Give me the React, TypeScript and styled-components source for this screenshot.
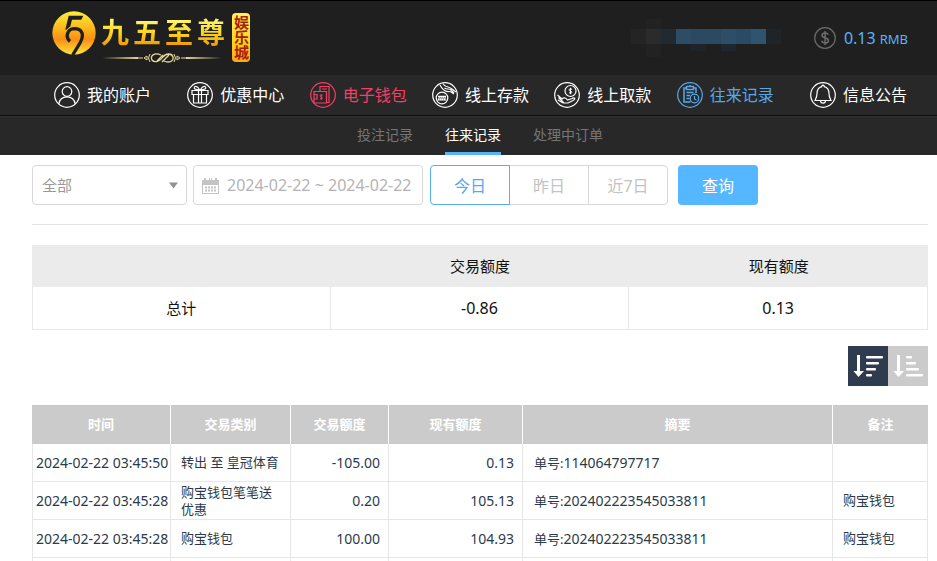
import React from "react";
import styled, { createGlobalStyle } from "styled-components";

const sans = `"Noto Sans", "Noto Sans CJK SC", sans-serif`;

const GlobalStyle = createGlobalStyle`
  *, *::before, *::after { box-sizing: border-box; }
  body { margin: 0; background: #fff; font-family: ${sans}; color: #2b3a4b; }
  button, input, select { font-family: inherit; margin: 0; }
`;

const Header = styled.header`
  display: flex;
  align-items: center;
  justify-content: space-between;
  height: 75px;
  padding: 0 29px 0 52px;
  background: #1f1f1f;
  border-top: 1px solid #000;
`;

const Logo = styled.a`
  display: flex;
  align-items: flex-start;
  gap: 5px;
  height: 54px;
  color: inherit;
  text-decoration: none;
`;

const LogoWords = styled.div`
  display: flex;
  flex-direction: column;
  padding-top: 4px;
`;

const LogoName = styled.div`
  display: flex;
  gap: 2px;
  height: 37px;
`;

const LogoChar = styled.span`
  width: 30px;
  font-size: 28px;
  font-weight: 700;
  line-height: 35px;
  color: transparent;
  background: linear-gradient(#fff46a 15%, #fbd414 50%, #f08c00 90%);
  background-clip: text;
  -webkit-background-clip: text;
`;

const LogoBadge = styled.div`
  display: flex;
  align-items: center;
  justify-content: center;
  width: 18px;
  height: 49px;
  margin-top: 2px;
  border-radius: 4px;
  background: linear-gradient(#fff25c, #ffd21c 60%, #fba81a);
  color: #a81c08;
  font-size: 15px;
  font-weight: 700;
  line-height: 18px;
  writing-mode: vertical-rl;
  text-orientation: upright;
`;

const Account = styled.div`
  display: flex;
  align-items: center;
  gap: 33px;
`;

const Balance = styled.div`
  display: flex;
  align-items: center;
  gap: 8px;
  color: #56b4fb;
  font-size: 16px;
  line-height: 24px;
`;

const Amount = styled.span`
  display: flex;
  align-items: baseline;
  gap: 4px;
`;

const Currency = styled.small`
  font-size: 13px;
`;

const MainNav = styled.nav`
  display: flex;
  justify-content: space-between;
  height: 41px;
  padding: 0 30px 0 54px;
  background: #282828;
  border-bottom: 1px solid #0c0c0c;
`;

const NavLink = styled.a<{ $tone: string }>`
  display: flex;
  align-items: center;
  gap: 7px;
  color: ${(p) => p.$tone};
  font-size: 16px;
  line-height: 24px;
  text-decoration: none;
  white-space: nowrap;
  &:first-child { margin-right: 11px; }
  &:last-child { margin-left: 11px; }
`;

const SubNav = styled.nav`
  display: flex;
  justify-content: center;
  gap: 32px;
  height: 39px;
  padding: 0 9px 0 32px;
  background: #282828;
  border-top: 1px solid #333;
`;

const SubLink = styled.a<{ $active?: boolean }>`
  color: ${(p) => (p.$active ? "#fff" : "#757575")};
  border-bottom: 3px solid ${(p) => (p.$active ? "#56b4fb" : "transparent")};
  font-size: 14px;
  line-height: 36px;
  text-decoration: none;
`;

const Content = styled.main`
  padding: 10px 9px 0 32px;
`;

const Filters = styled.form`
  display: flex;
  align-items: center;
  height: 60px;
  padding-bottom: 19px;
  border-bottom: 1px solid #e4e4e4;
`;

const Field = styled.label<{ $width: number }>`
  display: flex;
  align-items: center;
  width: ${(p) => p.$width}px;
  height: 40px;
  margin-right: 6px;
  padding: 0 8px;
  border: 1px solid #d8d8d8;
  border-radius: 4px;
  color: #b8b8b8;
`;

const TypeSelect = styled.select`
  flex: 1;
  height: 38px;
  padding: 0 1px;
  border: 0;
  background: none;
  appearance: none;
  color: #999;
  font-size: 15px;
  outline: none;
`;

const DateInput = styled.input`
  flex: 1;
  min-width: 0;
  height: 38px;
  padding: 0 0 0 8px;
  border: 0;
  background: none;
  color: #b4b4b4;
  font-size: 16px;
  outline: none;
`;

const RangeGroup = styled.div`
  display: flex;
  margin: 0 10px 0 1px;
`;

const RangeButton = styled.button<{ $active?: boolean }>`
  width: 80px;
  height: 40px;
  padding: 0;
  border: 1px solid ${(p) => (p.$active ? "#56b0ee" : "#d8d8d8")};
  background: #fff;
  color: ${(p) => (p.$active ? "#56a9ee" : "#c3c3c3")};
  font-size: 16px;
  z-index: ${(p) => (p.$active ? 1 : 0)};
  & + & { margin-left: -1px; }
  &:first-child { border-radius: 4px 0 0 4px; }
  &:last-child { border-radius: 0 4px 4px 0; }
`;

const SearchButton = styled.button`
  width: 80px;
  height: 40px;
  padding: 0;
  border: 0;
  border-radius: 4px;
  background: #55b7ff;
  color: #fff;
  font-size: 16px;
`;

const SummaryTable = styled.table`
  width: 100%;
  margin-top: 20px;
  border-collapse: separate;
  border-spacing: 0;
  table-layout: fixed;
  color: #111;
  font-size: 15px;
  line-height: 24px;
  text-align: center;
`;

const SummaryHead = styled.th`
  height: 42px;
  padding: 0;
  background: #ebebeb;
  font-weight: 400;
`;

const SummaryCell = styled.td`
  height: 43px;
  padding: 0;
  border: solid #e8e8e8;
  border-width: 0 1px 1px 0;
  &:first-child { border-left-width: 1px; }
`;

const SortBar = styled.div`
  display: flex;
  justify-content: flex-end;
  margin: 16px 0 19px;
`;

const SortButton = styled.button<{ $active?: boolean }>`
  display: flex;
  width: 40px;
  height: 40px;
  padding: 0;
  border: 0;
  background: ${(p) => (p.$active ? "#2f3b4e" : "#cbcbcb")};
`;

const RecordTable = styled.table`
  width: 100%;
  border-collapse: separate;
  border-spacing: 0;
  table-layout: fixed;
  font-size: 13px;
  line-height: 17px;
`;

const Col = styled.col<{ $width?: number }>`
  width: ${(p) => (p.$width ? `${p.$width}px` : "auto")};
`;

const RecordHead = styled.th`
  height: 39px;
  padding: 0;
  background: #cbcbcb;
  color: #fff;
  font-weight: 700;
  border-right: 1px solid #fff;
  &:last-child { border-right: 0; }
`;

type CellKind = "time" | "text" | "order" | "money";

const cellPadding: Record<CellKind, string> = {
  time: "0 0 0 3px",
  text: "0 10px",
  order: "0 11px",
  money: "0 8px 0 0",
};

const RecordCell = styled.td<{ $kind: CellKind }>`
  height: 38px;
  padding: ${(p) => cellPadding[p.$kind]};
  border: solid #e6e6e6;
  border-width: 0 1px 1px 0;
  text-align: ${(p) => (p.$kind === "money" ? "right" : "left")};
  white-space: ${(p) => (p.$kind === "text" ? "normal" : "nowrap")};
  &:first-child { border-left-width: 1px; }
`;

const Digits = styled.span<{ $large?: boolean }>`
  font-size: ${(p) => (p.$large ? 16 : 14)}px;
`;

const LogoMark = () => (
  <svg width="44" height="44" viewBox="0 0 132 132" aria-hidden="true">
    <defs>
      <linearGradient id="gold" x1="0" y1="0" x2="0" y2="1">
        <stop offset="0" stopColor="#ffee3a" />
        <stop offset=".4" stopColor="#fbb61c" />
        <stop offset=".65" stopColor="#f98f14" />
        <stop offset="1" stopColor="#ffe63c" />
      </linearGradient>
    </defs>
    <circle cx="66" cy="66" r="65" fill="url(#gold)" />
    <path d="M50 14H94L88 26H60L55 46L43 56H40Z" fill="#1f1f1f" />
    <path d="M54 91C40 80 44 54 67 53C91 53 98 72 84 96L62 132" fill="none" stroke="#1f1f1f" strokeWidth="10" />
  </svg>
);

const Flourish = () => (
  <svg width="122" height="12" viewBox="0 0 122 12" fill="none" stroke="#e8d795" aria-hidden="true">
    <path d="M1 6L37 5V7ZM121 6L85 5V7Z" fill="#e8d795" stroke="none" />
    <path d="M37 6h5M80 6h5M43 6l3-2v4zM79 6l-3-2v4z" />
    <path d="M49 2q-3 4 0 8M73 2q3 4 0 8" />
    <path d="M60 3C53 0 49 4 51 8C54 12 60 8 62 5C65 1 71 1 72 5C73 10 67 11 63 9M56 9L62 3M61 10L68 3" strokeWidth="1.3" />
  </svg>
);

const mosaic: [number, number, number, number, string][] = [
  [0, 10, 15, 15, "#242424"], [15, 0, 15, 38, "#222"], [15, 10, 15, 15, "#2b2b2b"],
  [30, 10, 15, 15, "#222a31"], [45, 10, 15, 15, "#2d4d67"], [60, 10, 15, 15, "#2b4a62"],
  [75, 10, 15, 15, "#2b4a62"], [90, 10, 15, 15, "#2d4e69"], [105, 10, 15, 15, "#2b4a63"],
  [120, 10, 15, 15, "#2f546f"], [135, 10, 15, 15, "#1f2428"], [60, 25, 15, 7, "#1f2428"],
  [90, 25, 15, 7, "#1f272e"],
];

const MaskedName = () => (
  <svg width="150" height="38" viewBox="0 0 150 38" aria-hidden="true">
    {mosaic.map(([x, y, w, h, fill], i) => (
      <rect key={i} x={x} y={y} width={w} height={h} fill={fill} />
    ))}
  </svg>
);

const Coin = () => (
  <svg width="22" height="22" viewBox="0 0 22 22" fill="none" stroke="#6c6c6c" aria-hidden="true">
    <circle cx="11" cy="11" r="10.3" strokeWidth="1.2" />
    <path d="M14.2 7.8C13.6 6.5 12.5 6.1 11 6.1C9.2 6.1 8 7 8 8.4C8 11.3 14.4 10.3 14.4 13.4C14.4 15 13 15.9 11.2 15.9C9.4 15.9 8.1 15.2 7.7 13.8M11.1 4v14" strokeWidth="1.5" />
  </svg>
);

const icons: Record<string, React.ReactNode> = {
  user: (
    <>
      <circle cx="13" cy="9.5" r="4.8" />
      <path d="M4.8 22C5.5 17.2 8.5 14.8 13 14.8S20.5 17.2 21.2 22" />
    </>
  ),
  gift: (
    <path d="M5 8.5h16v4H5zM6.5 12.5V21h13v-8.5M11.5 8.5V21M14.5 8.5V21M12.5 8C8 8 6.5 6.5 7.5 5S11.5 5 12.5 8M13.5 8C18 8 19.5 6.5 18.5 5S14.5 5 13.5 8" />
  ),
  wallet: (
    <>
      <path d="M10 9V4.500h9V20.500h-2.500M4 9.500h12.500V21H4zM4 12.500h3v4.500H4M12 7h5" />
      <path d="M12.500 13.200c-2.500-1.300-3.200 1.300-1.200 1.800s1.300 2.800-1.300 1.700M11.200 12v6" strokeWidth="1" />
    </>
  ),
  deposit: (
    <>
      <path d="M8 3C10 7 13 10 17 9.5C19 9.3 20 11 22 12M11 2C14 6 17 4 20 7L24 10M12.5 6C15 8 17 6 19 8L22 11" />
      <circle cx="10" cy="16" r="5.8" />
      <path d="M6 14.3h8M5.500 18h9M7.500 14.300l-1 3.700M9.500 14.300l-1 3.700M11.500 14.300l-1 3.700M13.500 14.300l-1 3.700" />
    </>
  ),
  withdraw: (
    <>
      <circle cx="16.5" cy="9" r="5.5" />
      <path d="M18 7.300c-3-1.500-4 1.400-1.500 1.800s1.400 3-1.500 1.600M16.500 5.800v6.500" strokeWidth="1" />
      <path d="M3.5 13L8 17C10 15 12 16 13.5 18L18 16.5C21 15 22 17 19 18.5L14 21H9L4 18M4.5 15.5L10 21" />
    </>
  ),
  records: (
    <>
      <path d="M9.500 6H7v14h6.500M16.500 6H19v5M9.500 4.500h7v3h-7zM13 4.500V3M9.500 10.500h7M9.500 13.500h3.500M9.500 16.500h3" strokeWidth="1.5" />
      <circle cx="17.5" cy="16.5" r="4.3" />
      <path d="M17.500 14v3l2 1" />
    </>
  ),
  bell: (
    <path d="M13 3.2C14 3.2 14.3 4 14.2 4.6C18 5.5 19 8 19 11.5C19 15 20 16.5 21 18.5H5C6 16.5 7 15 7 11.5C7 8 8 5.5 11.8 4.6C11.7 4 12 3.2 13 3.2ZM10.5 18.5C10.5 22 15.5 22 15.5 18.5" />
  ),
};

const NavIcon = ({ name }: { name: string }) => (
  <svg width="26" height="26" viewBox="0 0 26 26" fill="none" stroke="currentColor" strokeWidth="1.2" aria-hidden="true">
    <circle cx="13" cy="13" r="12.3" />
    {icons[name]}
  </svg>
);

const Calendar = () => (
  <svg width="17" height="17" viewBox="0 0 17 17" aria-hidden="true">
    <path d="M0 3h2V1h2v2h3V1h1v2h1V1h1v2h3V1h2v2h2v5H0z" fill="#c4c4c4" />
    <path d="M.5 4v12.500h16V4" fill="none" stroke="#c4c4c4" />
    <path d="M3 10.500h11M3 13.500h11" stroke="#c4c4c4" strokeWidth="2" strokeDasharray="2 1" />
  </svg>
);

const Caret = () => (
  <svg width="9" height="7" viewBox="0 0 9 7" aria-hidden="true">
    <path d="M0 .5h9L4.500 6.500z" fill="#929292" />
  </svg>
);

const SortIcon = ({ widths }: { widths: number[] }) => (
  <svg width="40" height="40" viewBox="0 0 40 40" fill="#fff" aria-hidden="true">
    <path d="M9 9h3v16h4l-5.500 6L5.500 25H9z" />
    {widths.map((w, i) => (
      <rect key={i} x="18" y={10 + i * 6} width={w} height="2.5" rx="1" />
    ))}
  </svg>
);

const navItems = [
  { label: "我的账户", icon: "user", tone: "#fff" },
  { label: "优惠中心", icon: "gift", tone: "#fff" },
  { label: "电子钱包", icon: "wallet", tone: "#f13f68" },
  { label: "线上存款", icon: "deposit", tone: "#fff" },
  { label: "线上取款", icon: "withdraw", tone: "#fff" },
  { label: "往来记录", icon: "records", tone: "#56a9e8" },
  { label: "信息公告", icon: "bell", tone: "#fff" },
];

const records = [
  { time: "2024-02-22 03:45:50", type: "转出 至 皇冠体育", amount: "-105.00", balance: "0.13", order: "114064797717", note: "" },
  { time: "2024-02-22 03:45:28", type: "购宝钱包笔笔送优惠", amount: "0.20", balance: "105.13", order: "202402223545033811", note: "购宝钱包" },
  { time: "2024-02-22 03:45:28", type: "购宝钱包", amount: "100.00", balance: "104.93", order: "202402223545033811", note: "购宝钱包" },
  { time: "", type: "", amount: "", balance: "", order: "", note: "" },
];

export default function App() {
  return (
    <>
      <GlobalStyle />
      <Header>
        <Logo href="#">
          <LogoMark />
          <LogoWords>
            <LogoName>
              {[..."九五至尊"].map((c) => (
                <LogoChar key={c}>{c}</LogoChar>
              ))}
            </LogoName>
            <Flourish />
          </LogoWords>
          <LogoBadge>娱乐城</LogoBadge>
        </Logo>
        <Account>
          <MaskedName />
          <Balance>
            <Coin />
            <Amount>
              0.13 <Currency>RMB</Currency>
            </Amount>
          </Balance>
        </Account>
      </Header>
      <MainNav>
        {navItems.map((item) => (
          <NavLink key={item.label} href="#" $tone={item.tone}>
            <NavIcon name={item.icon} />
            {item.label}
          </NavLink>
        ))}
      </MainNav>
      <SubNav>
        <SubLink href="#">投注记录</SubLink>
        <SubLink href="#" $active>往来记录</SubLink>
        <SubLink href="#">处理中订单</SubLink>
      </SubNav>
      <Content>
        <Filters onSubmit={(e) => e.preventDefault()}>
          <Field $width={155}>
            <TypeSelect aria-label="交易类别">
              <option>全部</option>
            </TypeSelect>
            <Caret />
          </Field>
          <Field $width={230}>
            <Calendar />
            <DateInput aria-label="时间" defaultValue="2024-02-22 ~ 2024-02-22" />
          </Field>
          <RangeGroup>
            <RangeButton type="button" $active>今日</RangeButton>
            <RangeButton type="button">昨日</RangeButton>
            <RangeButton type="button">近7日</RangeButton>
          </RangeGroup>
          <SearchButton type="submit">查询</SearchButton>
        </Filters>
        <SummaryTable>
          <thead>
            <tr>
              <SummaryHead />
              <SummaryHead>交易额度</SummaryHead>
              <SummaryHead>现有额度</SummaryHead>
            </tr>
          </thead>
          <tbody>
            <tr>
              <SummaryCell>总计</SummaryCell>
              <SummaryCell><Digits $large>-0.86</Digits></SummaryCell>
              <SummaryCell><Digits $large>0.13</Digits></SummaryCell>
            </tr>
          </tbody>
        </SummaryTable>
        <SortBar>
          <SortButton type="button" aria-label="降序" $active>
            <SortIcon widths={[17, 13, 10, 6]} />
          </SortButton>
          <SortButton type="button" aria-label="升序">
            <SortIcon widths={[6, 10, 13, 17]} />
          </SortButton>
        </SortBar>
        <RecordTable>
          <colgroup>
            <Col $width={139} />
            <Col $width={120} />
            <Col $width={98} />
            <Col $width={134} />
            <Col />
            <Col $width={95} />
          </colgroup>
          <thead>
            <tr>
              {["时间", "交易类别", "交易额度", "现有额度", "摘要", "备注"].map((h) => (
                <RecordHead key={h}>{h}</RecordHead>
              ))}
            </tr>
          </thead>
          <tbody>
            {records.map((r, i) => (
              <tr key={i}>
                <RecordCell $kind="time"><Digits>{r.time}</Digits></RecordCell>
                <RecordCell $kind="text">{r.type}</RecordCell>
                <RecordCell $kind="money"><Digits>{r.amount}</Digits></RecordCell>
                <RecordCell $kind="money"><Digits>{r.balance}</Digits></RecordCell>
                <RecordCell $kind="order">{r.order && <>单号:<Digits>{r.order}</Digits></>}</RecordCell>
                <RecordCell $kind="text">{r.note}</RecordCell>
              </tr>
            ))}
          </tbody>
        </RecordTable>
      </Content>
    </>
  );
}
